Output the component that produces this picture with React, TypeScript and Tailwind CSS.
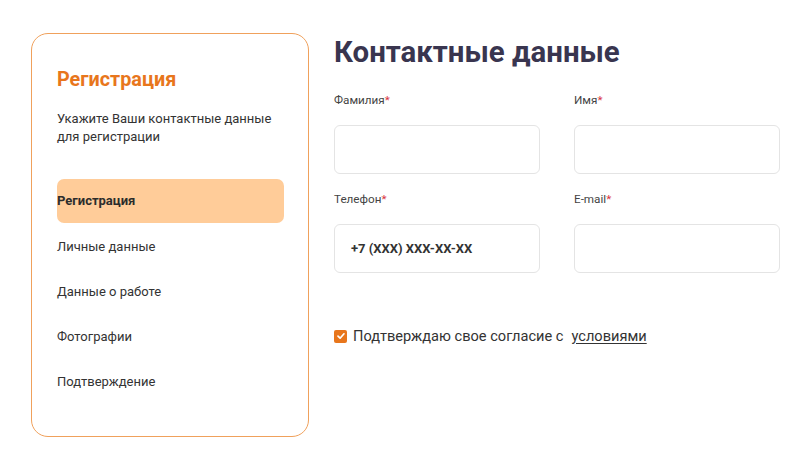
import React from "react";

const font = { fontFamily: "Roboto, 'Noto Sans', sans-serif" };

function Field({ label, value }: { label: string; value?: string }) {
  return (
    <div className="flex flex-col">
      <div className="text-[11.7px] leading-[16px] text-[#444444] h-4">
        {label}
        <span className="text-[#d9363e]">*</span>
      </div>
      <div className="mt-[17px] h-[49px] rounded-[6px] border border-[#e4e4e4] bg-white flex items-center pl-[16px] text-[13px] font-bold text-[#333333]">
        {value}
      </div>
    </div>
  );
}

export default function App() {
  const items = ["Личные данные", "Данные о работе", "Фотографии", "Подтверждение"];
  return (
    <div className="w-[800px] h-[466px] bg-white flex pt-[33px] pl-[31px]" style={font}>
      <div className="w-[278px] h-[404px] border border-[#f0a15c] rounded-[17px] pl-[25px] pr-[24px] pt-[34px] flex flex-col shrink-0">
        <div className="text-[19.8px] leading-[24px] font-bold text-[#e8761c]">Регистрация</div>
        <div className="mt-[18px] text-[13px] leading-[18px] text-[#333333] whitespace-nowrap">
          Укажите Ваши контактные данные
          <br />
          для регистрации
        </div>
        <div className="mt-[33px] h-[44px] rounded-[7px] bg-[#ffcc99] flex items-center text-[13px] font-bold text-[#2c2c2c]">
          Регистрация
        </div>
        {items.map((t) => (
          <div key={t} className="h-[45px] flex items-center text-[13px] text-[#333333] pt-[2px]">
            {t}
          </div>
        ))}
      </div>
      <div className="ml-[25px] w-[446px] flex flex-col">
        <div className="mt-[1px] text-[29.4px] leading-[36px] font-bold text-[#39354f]">Контактные данные</div>
        <div className="mt-[22px] grid grid-cols-[206px_206px] gap-x-[34px] gap-y-[17px]">
          <Field label="Фамилия" />
          <Field label="Имя" />
          <Field label="Телефон" value="+7 (XXX) XXX-XX-XX" />
          <Field label="E-mail" />
        </div>
        <div className="mt-[53px] flex items-center text-[14.6px] leading-[20px] text-[#333333]">
          <span className="w-[13px] h-[13px] rounded-[2px] bg-[#e8761c] flex items-center justify-center shrink-0">
            <svg width="10" height="10" viewBox="0 0 10 10" fill="none">
              <path d="M2 5.2 L4.1 7.2 L8 2.8" stroke="white" strokeWidth="1.7" strokeLinecap="round" strokeLinejoin="round" />
            </svg>
          </span>
          <span className="ml-[6px]">Подтверждаю свое согласие с</span>
          <span className="ml-[8px] underline underline-offset-2">условиями</span>
        </div>
      </div>
    </div>
  );
}
